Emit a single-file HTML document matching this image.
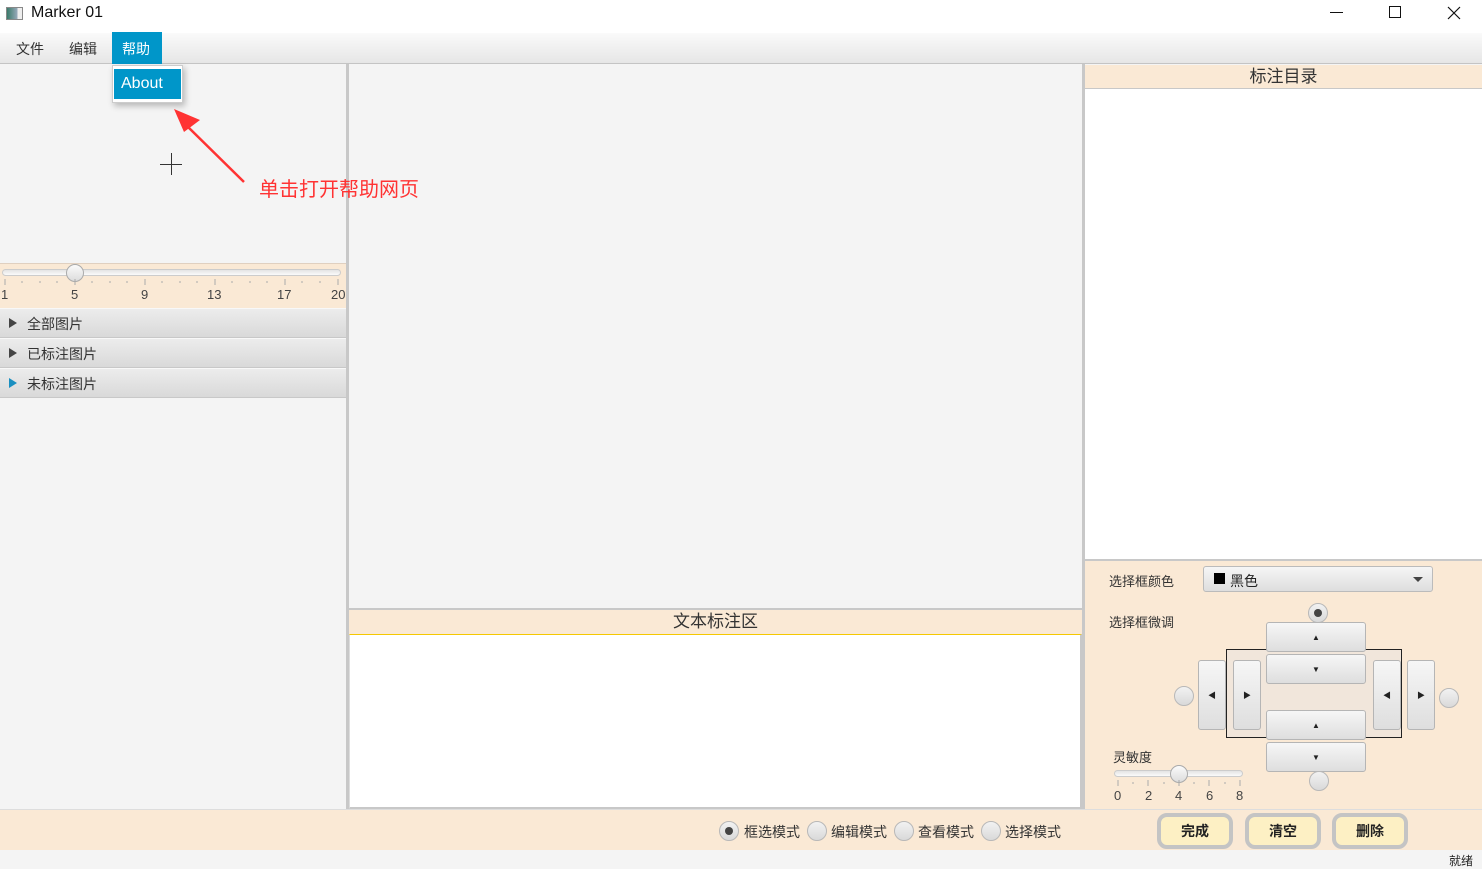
<!DOCTYPE html>
<html><head><meta charset="utf-8"><style>
*{box-sizing:border-box;margin:0;padding:0}
body{width:1482px;height:866px;position:relative;overflow:hidden;background:#f4f4f4;font-family:"Liberation Sans","Noto Sans CJK SC",sans-serif;font-size:14px;color:#333}
.a{position:absolute}
.btn{position:absolute;background:linear-gradient(#f6f6f6,#dedede);border:1px solid #b5b5b5;border-radius:3px;display:flex;align-items:center;justify-content:center;font-size:8px;color:#222}
.rad{position:absolute;width:20px;height:20px;border-radius:50%;background:linear-gradient(#f2f2f2,#d9d9d9);border:1px solid #b8b8b8}
.rad.on::after{content:"";position:absolute;left:5px;top:5px;width:8px;height:8px;border-radius:50%;background:#444}
.acc{position:absolute;left:0;width:346px;height:30px;background:linear-gradient(#ececec,#d9d9d9);border-bottom:1px solid #c8c8c8;border-top:1px solid #f8f8f8}
.acc span{position:absolute;left:27px;top:5px;font-size:14px;color:#333}
.tri{position:absolute;left:9px;top:9px;width:0;height:0;border-left:8px solid #444;border-top:5px solid transparent;border-bottom:5px solid transparent}
.bb{position:absolute;top:813px;width:76px;height:36px;border:4px solid #c4c4c4;border-radius:10px;background:#fdf0c4;font-weight:bold;font-size:14px;display:flex;align-items:center;justify-content:center;color:#222}
.sl{position:absolute;top:788px;font-size:13px;color:#444}
</style></head><body>
<div class="a" style="left:0;top:0;width:1482px;height:33px;background:#fff"></div>
<div class="a" style="left:6px;top:7px;width:17px;height:13px;border:1px solid #888;background:linear-gradient(90deg,#3a7a6a,#9ab 70%,#eee 70%)"></div>
<div class="a" style="left:31px;top:4px;font-size:16px;color:#111">Marker 01</div>
<div class="a" style="left:1330px;top:12px;width:13px;height:1px;background:#111"></div>
<div class="a" style="left:1389px;top:6px;width:12px;height:12px;border:1px solid #111"></div>
<svg class="a" style="left:1447px;top:6px" width="14" height="14"><path d="M1 1L13 13M13 1L1 13" stroke="#111" stroke-width="1.2"/></svg>
<div class="a" style="left:0;top:33px;width:1482px;height:31px;background:linear-gradient(#fafafa,#e6e6e6);border-bottom:1px solid #c4c4c4"></div>
<div class="a" style="left:16px;top:39px">文件</div>
<div class="a" style="left:69px;top:39px">编辑</div>
<div class="a" style="left:112px;top:32px;width:50px;height:32px;background:#0096c9;color:#fff;padding:7px 0 0 10px">帮助</div>
<div class="a" style="left:346px;top:64px;width:3px;height:745px;background:#c8c8c8"></div>
<div class="a" style="left:0;top:263px;width:346px;height:45px;background:#fae9d5;border-top:1px solid #e0d0c0"></div>
<div class="a" style="left:2px;top:269px;width:339px;height:7px;border-radius:4px;background:linear-gradient(#e4e4e4,#fafafa);border:1px solid #ccc"></div>
<div class="a" style="left:66px;top:264px;width:18px;height:18px;border-radius:50%;background:linear-gradient(#fbfbfb,#dcdcdc);border:1px solid #aaa"></div>
<svg class="a" style="left:0;top:278px" width="346" height="8"><g stroke="#aaa">
<path d="M5 1v6M75 1v6M145 1v6M215 1v6M285 1v6M338 1v6"/>
<path d="M22 3v2M40 3v2M57 3v2M92 3v2M110 3v2M127 3v2M162 3v2M180 3v2M197 3v2M232 3v2M250 3v2M267 3v2M302 3v2M320 3v2"/></g></svg>
<div class="a" style="left:1px;top:287px;font-size:13px;color:#444">1</div>
<div class="a" style="left:71px;top:287px;font-size:13px;color:#444">5</div>
<div class="a" style="left:141px;top:287px;font-size:13px;color:#444">9</div>
<div class="a" style="left:207px;top:287px;font-size:13px;color:#444">13</div>
<div class="a" style="left:277px;top:287px;font-size:13px;color:#444">17</div>
<div class="a" style="left:331px;top:287px;font-size:13px;color:#444">20</div>
<div class="acc" style="top:308px"><div class="tri"></div><span>全部图片</span></div>
<div class="acc" style="top:338px"><div class="tri"></div><span>已标注图片</span></div>
<div class="acc" style="top:368px"><div class="tri" style="border-left-color:#1a8fc0"></div><span>未标注图片</span></div>
<div class="a" style="left:160px;top:164px;width:22px;height:1px;background:#333"></div>
<div class="a" style="left:171px;top:153px;width:1px;height:22px;background:#333"></div>
<div class="a" style="left:349px;top:608px;width:733px;height:2px;background:#c8c8c8"></div>
<div class="a" style="left:349px;top:610px;width:733px;height:24px;background:#fae9d5;text-align:center;font-size:17px;line-height:24px;color:#333">文本标注区</div>
<div class="a" style="left:349px;top:634px;width:733px;height:175px;background:#fff;border-top:1px solid #f5c800;border-left:1px solid #ddd;border-right:2px solid #c8c8c8;border-bottom:2px solid #c8c8c8"></div>
<div class="a" style="left:1082px;top:64px;width:3px;height:745px;background:#c8c8c8"></div>
<div class="a" style="left:1085px;top:65px;width:397px;height:24px;background:#fae9d5;border-bottom:1px solid #c8c8c8;text-align:center;font-size:17px;line-height:23px;color:#333">标注目录</div>
<div class="a" style="left:1085px;top:89px;width:397px;height:470px;background:#fff"></div>
<div class="a" style="left:1085px;top:559px;width:397px;height:250px;background:#fae9d5;border-top:2px solid #c8c8c8"></div>
<div class="a" style="left:1109px;top:571px;font-size:13px">选择框颜色</div>
<div class="a" style="left:1203px;top:566px;width:230px;height:26px;border:1px solid #bbb;border-radius:3px;background:linear-gradient(#f6f6f6,#dedede)"></div>
<div class="a" style="left:1214px;top:573px;width:11px;height:11px;background:#000"></div>
<div class="a" style="left:1230px;top:571px;font-size:14px;color:#222">黑色</div>
<div class="a" style="left:1413px;top:577px;border-top:5px solid #444;border-left:5px solid transparent;border-right:5px solid transparent"></div>
<div class="a" style="left:1109px;top:612px;font-size:13px">选择框微调</div>
<div class="a" style="left:1226px;top:649px;width:176px;height:89px;border:1px solid #222;background:#f1e6db"></div>
<div class="rad on" style="left:1308px;top:603px"></div>
<div class="btn" style="left:1266px;top:622px;width:100px;height:30px">▲</div>
<div class="btn" style="left:1266px;top:654px;width:100px;height:30px">▼</div>
<div class="btn" style="left:1266px;top:710px;width:100px;height:30px">▲</div>
<div class="btn" style="left:1266px;top:742px;width:100px;height:30px">▼</div>
<div class="btn" style="left:1198px;top:660px;width:28px;height:70px">◀</div>
<div class="btn" style="left:1233px;top:660px;width:28px;height:70px">▶</div>
<div class="btn" style="left:1373px;top:660px;width:28px;height:70px">◀</div>
<div class="btn" style="left:1407px;top:660px;width:28px;height:70px">▶</div>
<div class="rad" style="left:1174px;top:686px"></div>
<div class="rad" style="left:1439px;top:688px"></div>
<div class="rad" style="left:1309px;top:771px"></div>
<div class="a" style="left:1113px;top:747px;font-size:13px">灵敏度</div>
<div class="a" style="left:1114px;top:770px;width:129px;height:7px;border-radius:4px;background:linear-gradient(#e4e4e4,#fafafa);border:1px solid #ccc"></div>
<div class="a" style="left:1170px;top:765px;width:18px;height:18px;border-radius:50%;background:linear-gradient(#fbfbfb,#dcdcdc);border:1px solid #aaa"></div>
<svg class="a" style="left:1110px;top:779px" width="140" height="8"><g stroke="#aaa"><path d="M8 1v6M38 1v6M69 1v6M99 1v6M130 1v6M23 3v2M54 3v2M84 3v2M115 3v2"/></g></svg>
<div class="sl" style="left:1114px">0</div><div class="sl" style="left:1145px">2</div><div class="sl" style="left:1175px">4</div><div class="sl" style="left:1206px">6</div><div class="sl" style="left:1236px">8</div>
<div class="a" style="left:0;top:809px;width:1482px;height:41px;background:#fae9d5;border-top:1px solid #ddd"></div>
<div class="rad on" style="left:719px;top:821px"></div><div class="a" style="left:744px;top:822px;font-size:14px">框选模式</div>
<div class="rad" style="left:807px;top:821px"></div><div class="a" style="left:831px;top:822px;font-size:14px">编辑模式</div>
<div class="rad" style="left:894px;top:821px"></div><div class="a" style="left:918px;top:822px;font-size:14px">查看模式</div>
<div class="rad" style="left:981px;top:821px"></div><div class="a" style="left:1005px;top:822px;font-size:14px">选择模式</div>
<div class="bb" style="left:1157px">完成</div>
<div class="bb" style="left:1245px">清空</div>
<div class="bb" style="left:1332px">删除</div>
<div class="a" style="left:1449px;top:852px;font-size:12px;color:#222">就绪</div>
<div class="a" style="left:112px;top:65px;width:71px;height:38px;background:#fff;border:1px solid #ccc;box-shadow:2px 3px 6px rgba(0,0,0,.25)"></div>
<div class="a" style="left:114px;top:69px;width:67px;height:30px;background:#0096c9;color:#fff;font-size:16px;padding:6px 0 0 7px">About</div>
<svg class="a" style="left:170px;top:105px" width="80" height="80"><path d="M74 77L16 20" stroke="#f33" stroke-width="2.5"/><path d="M4 4L30 15L14 27Z" fill="#f33"/></svg>
<div class="a" style="left:259px;top:173px;font-size:20px;color:#f33">单击打开帮助网页</div>
</body></html>
